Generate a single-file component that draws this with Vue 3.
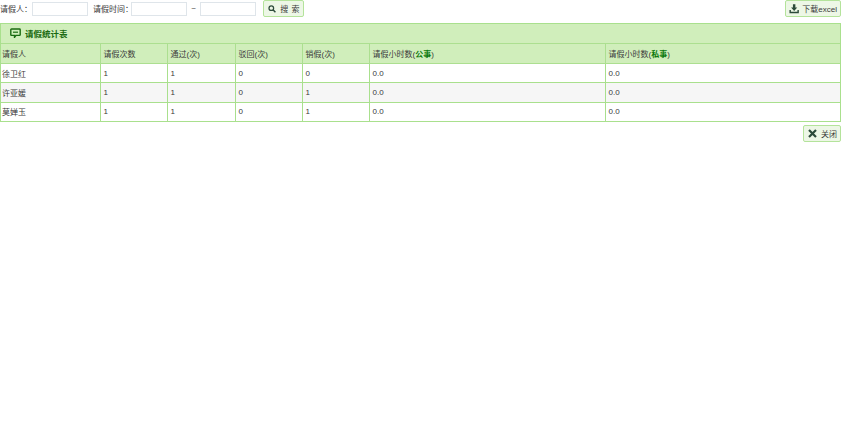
<script setup>
const cols = [99, 67, 68, 67, 67, 236, 235]
const rows = [
  ['徐卫红', '1', '1', '0', '0', '0.0', '0.0'],
  ['许亚媛', '1', '1', '0', '1', '0.0', '0.0'],
  ['莫婵玉', '1', '1', '0', '1', '0.0', '0.0'],
]
</script>

<template>
  <div class="page">
    <div class="toolbar">
      <div class="filters">
        <label class="lbl">请假人：</label>
        <input class="field" />
        <label class="lbl second">请假时间：</label>
        <input class="field" />
        <span class="tilde">~</span>
        <input class="field" />
        <button class="btn search">
          <svg width="10" height="10" viewBox="0 0 10 10"><circle cx="4" cy="4" r="2.8" fill="none" stroke="#2c4a3a" stroke-width="1.5"/><path d="M6 6l3 3" stroke="#2c4a3a" stroke-width="1.8"/></svg>
          <span class="spaced">搜 索</span>
        </button>
      </div>
      <button class="btn excel">
        <svg width="11" height="10" viewBox="0 0 11 10"><path d="M4.2 0h2.6v3.5h2L5.500 7 2.200 3.500h2z" fill="#2c4a3a"/><path d="M.5 6v3.500h10V6H9v2H2V6z" fill="#2c4a3a"/></svg>
        <span>下载excel</span>
      </button>
    </div>

    <div class="panel">
      <div class="title">
        <svg width="11" height="10" viewBox="0 0 11 10"><path d="M1.500 1h8a.7.7 0 0 1 .7.7v5a.7.7 0 0 1-.7.7H6L4.500 9.400V7.400h-3a.7.7 0 0 1-.7-.7v-5A.7.7 0 0 1 1.500 1z" fill="none" stroke="#1a6b12" stroke-width="1.400"/><path d="M3 4.200h5" stroke="#1a6b12" stroke-width="1.200"/></svg>
        <span>请假统计表</span>
      </div>
      <table class="grid">
        <colgroup>
          <col v-for="(w, i) in cols" :key="i" :style="{ width: w + 'px' }" />
        </colgroup>
        <thead>
          <tr>
            <th>请假人</th>
            <th>请假次数</th>
            <th>通过(次)</th>
            <th>驳回(次)</th>
            <th>销假(次)</th>
            <th>请假小时数(<em>公事</em>)</th>
            <th>请假小时数(<em>私事</em>)</th>
          </tr>
        </thead>
        <tbody>
          <tr v-for="(r, i) in rows" :key="i">
            <td v-for="(c, j) in r" :key="j">{{ c }}</td>
          </tr>
        </tbody>
      </table>
    </div>

    <div class="footer">
      <button class="btn close">
        <svg width="9" height="9" viewBox="0 0 9 9"><path d="M1 1l7 7M8 1L1 8" stroke="#2c4a3a" stroke-width="2.200"/></svg>
        <span>关闭</span>
      </button>
    </div>
  </div>
</template>

<style scoped>
.page {
  width: 845px;
  height: 440px;
  background: #fff;
  font-family: "Liberation Sans", "Noto Sans CJK SC", sans-serif;
  font-size: 8px;
  color: #3a3a3a;
  overflow: hidden;
}
.toolbar {
  display: flex;
  justify-content: space-between;
  align-items: flex-start;
  height: 23px;
  padding-right: 4px;
}
.filters {
  display: flex;
  align-items: center;
  height: 17px;
}
.lbl { white-space: nowrap; width: 32px; }
.lbl.second { width: 38px; margin-left: 5px; }
.field {
  box-sizing: border-box;
  width: 56px;
  height: 14px;
  margin: 0;
  padding: 0;
  border: 1px solid #dfe5ea;
  background: #fff;
}
.tilde { width: 13px; text-align: center; }
.btn {
  display: flex;
  align-items: center;
  flex-shrink: 0;
  box-sizing: border-box;
  height: 17px;
  margin: 0;
  padding: 0 3px;
  gap: 3px;
  border: 1px solid #b4e39b;
  border-radius: 2px;
  background: #edf7e6;
  color: #3a3a3a;
  font: inherit;
  white-space: nowrap;
}
.search { width: 41px; margin-left: 7px; padding-left: 4px; gap: 4px; }
.spaced { white-space: pre; letter-spacing: 0.5px; }
.excel { width: 56px; }
.panel {
  width: 841px;
  box-sizing: border-box;
  border: 1px solid #a9e08d;
  border-bottom: 0;
  overflow: hidden;
}
.title {
  display: flex;
  align-items: center;
  gap: 4px;
  height: 19px;
  padding: 0 0 1px 9px;
  box-sizing: border-box;
  background: #d0eebb;
  color: #1a6b12;
  font-weight: 700;
  font-size: 8.500px;
}
.grid {
  width: 839px;
  table-layout: fixed;
  border-collapse: collapse;
}
.grid th,
.grid td {
  box-sizing: border-box;
  padding: 0 2px 0 3px;
  border: 1px solid #a9e08d;
  text-align: left;
  font-weight: 400;
}
.grid tr > :first-child { border-left: 0; padding-left: 1px; }
.grid tr > :last-child { border-right: 0; }
.grid th {
  height: 20px;
  background: #d0eebb;
  border-color: #acdf90;
}
.grid th em { font-style: normal; color: #0d7a0d; font-weight: 700; }
.grid td { height: 19.330px; }
.grid tbody tr:nth-child(2) td { background: #f6f6f6; }
.footer {
  display: flex;
  justify-content: flex-end;
  padding: 3px 4px 0 0;
}
.close { width: 38px; padding-left: 4px; gap: 4px; }
</style>
